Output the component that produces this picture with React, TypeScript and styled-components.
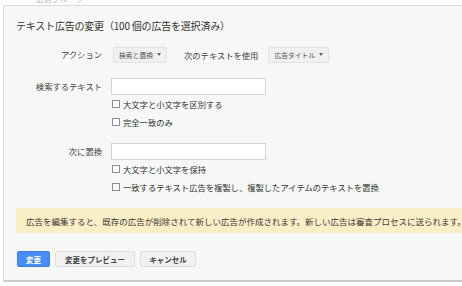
import React from 'react';
import styled, { createGlobalStyle } from 'styled-components';

const Global = createGlobalStyle`
  html, body {
    margin: 0;
    padding: 0;
    background: #ffffff;
    overflow: hidden;
  }
  body {
    font-family: "Noto Sans CJK JP", "Noto Sans", "Liberation Sans", sans-serif;
    color: #333333;
  }
`

const Page = styled.div`
  width: 462px;
  height: 286px;
  overflow: hidden;
  padding-left: 3px;
  box-sizing: border-box;
`

const Crumb = styled.div`
  height: 5px;
  overflow: hidden;
  padding-left: 33px;
  font-size: 8px;
  line-height: 10px;
  color: #b8b8b8;

  span {
    display: block;
    margin-top: -6px;
  }
`

const Panel = styled.div`
  width: 540px;
  height: 277px;
  box-sizing: border-box;
  background: #f5f8f5;
  border: 1px solid #d8dbd8;
  border-bottom: 2px solid #c9ccc9;
  padding: 13px 0 0 12px;
  display: flex;
  flex-direction: column;
`

const Title = styled.h2`
  margin: 0;
  font-size: 10px;
  line-height: 14px;
  font-weight: normal;
  color: #333333;
  letter-spacing: -0.2px;
`

const Form = styled.div`
  display: grid;
  grid-template-columns: 86px 1fr;
  column-gap: 9px;
  margin-top: 13px;
`

const Label = styled.div<{ $top?: number }>`
  text-align: right;
  font-size: 8.3px;
  line-height: 17px;
  color: #444444;
  margin-top: ${p => p.$top ?? 0}px;
`

const Field = styled.div<{ $top?: number }>`
  display: flex;
  flex-direction: column;
  margin-top: ${p => p.$top ?? 0}px;
`

const ActionRow = styled.div`
  display: flex;
  align-items: center;
  gap: 17px;
  padding-left: 2px;
`

const Dropdown = styled.div`
  height: 16px;
  box-sizing: border-box;
  padding: 0 5px;
  display: flex;
  align-items: center;
  gap: 4px;
  background: #f0f0f0;
  border: 1px solid #e2e2e2;
  border-radius: 2px;
  font-size: 6.8px;
  color: #555555;
`

const Caret = styled.span`
  width: 0;
  height: 0;
  border-left: 2.5px solid transparent;
  border-right: 2.5px solid transparent;
  border-top: 3px solid #666666;
`

const Inline = styled.span`
  font-size: 8.3px;
  color: #444444;
  margin-right: -7px;
`

const Input = styled.div`
  width: 155px;
  height: 17px;
  box-sizing: border-box;
  background: #ffffff;
  border: 1px solid #d4d4d4;
`

const Checks = styled.div`
  display: flex;
  flex-direction: column;
  gap: 7px;
  margin-top: 3px;
  padding-left: 1px;
`

const Check = styled.label`
  display: flex;
  align-items: center;
  gap: 3px;
  height: 11px;
  font-size: 8.3px;
  color: #333333;
`

const Box = styled.span`
  width: 8px;
  height: 8px;
  box-sizing: border-box;
  border: 1px solid #8a8f99;
  background: #fbfbfb;
`

const Notice = styled.div`
  margin-top: 16px;
  height: 25px;
  background: #f9eec6;
  display: flex;
  align-items: center;
  padding-left: 10px;
  font-size: 8.5px;
  color: #3a3a3a;
  white-space: nowrap;
`

const Buttons = styled.div`
  display: flex;
  gap: 5px;
  margin-top: 18px;
  padding-left: 1px;
`

const Button = styled.div<{ $primary?: boolean; $w: number }>`
  width: ${p => p.$w}px;
  height: 16px;
  box-sizing: border-box;
  display: flex;
  align-items: center;
  justify-content: center;
  font-size: 7.5px;
  font-weight: bold;
  border-radius: 2px;
  background: ${p => (p.$primary ? '#4a8cf6' : '#f1f1f1')};
  color: ${p => (p.$primary ? '#ffffff' : '#444444')};
  border: 1px solid ${p => (p.$primary ? '#3b7ce8' : '#dedede')};
`

export default function App() {
  return (
    <Page>
      <Global />
      <Crumb><span>広告グループ</span></Crumb>
      <Panel>
        <Title>テキスト広告の変更（100 個の広告を選択済み）</Title>
        <Form>
          <Label>アクション</Label>
          <ActionRow>
            <Dropdown>検索と置換 <Caret /></Dropdown>
            <Inline>次のテキストを使用</Inline>
            <Dropdown>広告タイトル <Caret /></Dropdown>
          </ActionRow>

          <Label $top={15}>検索するテキスト</Label>
          <Field $top={15}>
            <Input />
            <Checks>
              <Check><Box />大文字と小文字を区別する</Check>
              <Check><Box />完全一致のみ</Check>
            </Checks>
          </Field>

          <Label $top={16}>次に置換</Label>
          <Field $top={16}>
            <Input />
            <Checks>
              <Check><Box />大文字と小文字を保持</Check>
              <Check><Box />一致するテキスト広告を複製し、複製したアイテムのテキストを置換</Check>
            </Checks>
          </Field>
        </Form>

        <Notice>広告を編集すると、既存の広告が削除されて新しい広告が作成されます。新しい広告は審査プロセスに送られます。</Notice>

        <Buttons>
          <Button $primary $w={33}>変更</Button>
          <Button $w={80}>変更をプレビュー</Button>
          <Button $w={56}>キャンセル</Button>
        </Buttons>
      </Panel>
    </Page>
  );
}
